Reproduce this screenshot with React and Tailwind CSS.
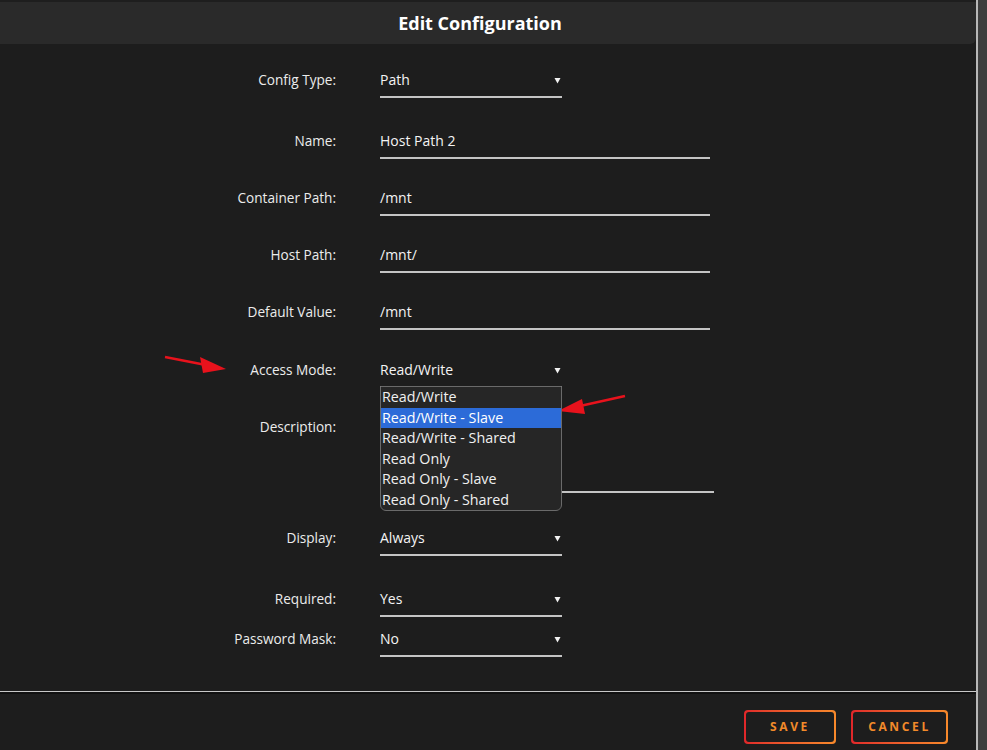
import React from "react";

const font = { fontFamily: '"Open Sans", "Liberation Sans", sans-serif' };

const accessModes = [
  "Read/Write",
  "Read/Write - Slave",
  "Read/Write - Shared",
  "Read Only",
  "Read Only - Slave",
  "Read Only - Shared",
];

function Caret() {
  return (
    <svg width="7" height="7" viewBox="0 0 7 7" className="absolute right-[1px] top-[7px]">
      <path d="M0.5 1 L6.5 1 L3.5 6.5 Z" fill="#f2f2f2" />
    </svg>
  );
}

function Row({ label, mt, children }) {
  return (
    <div className={`flex items-start ${mt}`}>
      <div className="w-[336px] shrink-0 text-right text-[13.6px] leading-[20px] text-[#ececec]">{label}</div>
      <div className="ml-[44px]">{children}</div>
    </div>
  );
}

function Input({ value, w = "w-[330px]" }) {
  return (
    <div className={`${w} h-[28px] border-b-2 border-[#c4c4c4] pb-[6px] text-[14px] leading-[20px] text-[#f4f4f4]`}>
      {value}
    </div>
  );
}

function Select({ value, children }) {
  return (
    <div className="relative w-[182px] h-[28px] border-b-2 border-[#c4c4c4] pb-[6px] text-[14px] leading-[20px] text-[#f4f4f4]">
      {value}
      <Caret />
      {children}
    </div>
  );
}

function Button({ label, w }) {
  return (
    <div className={`${w} h-[34px] rounded-[4px] bg-gradient-to-r from-[#e0262a] to-[#f7892b] p-[2px]`}>
      <div className="flex h-full w-full items-center justify-center rounded-[3px] bg-[#1d1d1d]">
        <span className="text-[12px] font-bold tracking-[0.22em] text-[#f28a2a]">{label}</span>
      </div>
    </div>
  );
}

export default function App() {
  return (
    <div style={font} className="relative flex h-[750px] w-[987px] overflow-hidden bg-[#1d1d1d]">
      <div className="flex w-[976px] flex-col">
        <div className="h-[44px] border-t-2 border-[#1e1e1e] bg-[#2a2a2a] rounded-br-[6px] flex items-center justify-center pr-[16px]">
          <h1 className="text-[18px] font-bold text-white">Edit Configuration</h1>
        </div>

        <div className="flex flex-col pt-[26px]">
          <Row label="Config Type:" mt="mt-0">
            <Select value="Path" />
          </Row>
          <Row label="Name:" mt="mt-[33px]">
            <Input value="Host Path 2" />
          </Row>
          <Row label="Container Path:" mt="mt-[29px]">
            <Input value="/mnt" />
          </Row>
          <Row label="Host Path:" mt="mt-[29px]">
            <Input value="/mnt/" />
          </Row>
          <Row label="Default Value:" mt="mt-[29px]">
            <Input value="/mnt" />
          </Row>
          <Row label="Access Mode:" mt="mt-[30px]">
            <Select value="Read/Write">
              <div className="absolute left-0 top-[26px] z-10 w-[182px] rounded-b-[6px] border border-[#6a6a6a] bg-[#262626]">
                {accessModes.map((m, i) => (
                  <div
                    key={m}
                    className={`h-[20.5px] pl-[1px] text-[14.3px] leading-[20.5px] ${
                      i === 1 ? "bg-[#2c6bd8] text-white" : "text-[#f0f0f0]"
                    }`}
                  >
                    {m}
                  </div>
                ))}
              </div>
            </Select>
          </Row>
          <Row label="Description:" mt="mt-[29px]">
            <div className="h-[76px] w-[334px] border-b-2 border-[#c4c4c4]" />
          </Row>
          <Row label="Display:" mt="mt-[35px]">
            <Select value="Always" />
          </Row>
          <Row label="Required:" mt="mt-[33px]">
            <Select value="Yes" />
          </Row>
          <Row label="Password Mask:" mt="mt-[12px]">
            <Select value="No" />
          </Row>
        </div>

        <div className="mt-[34px] h-[3px] border-t border-[#c8c8c8] border-b-2 border-b-[#111]" />

        <div className="flex justify-end gap-[15px] pr-[28px] pt-[16px]">
          <Button label="SAVE" w="w-[92px]" />
          <Button label="CANCEL" w="w-[97px]" />
        </div>
      </div>

      <div className="w-[11px] border-l-2 border-[#b8b8b8] bg-[#3e3e3e]" />

      <svg className="pointer-events-none absolute left-0 top-0" width="987" height="750">
        <line x1="165" y1="357" x2="206" y2="365" stroke="#e8121c" strokeWidth="2.5" />
        <path d="M226 369 L200 357 L203 373 Z" fill="#e8121c" />
        <line x1="625" y1="396" x2="580" y2="406" stroke="#e8121c" strokeWidth="2.5" />
        <path d="M558 411 L582 399 L585 414 Z" fill="#e8121c" />
      </svg>
    </div>
  );
}
